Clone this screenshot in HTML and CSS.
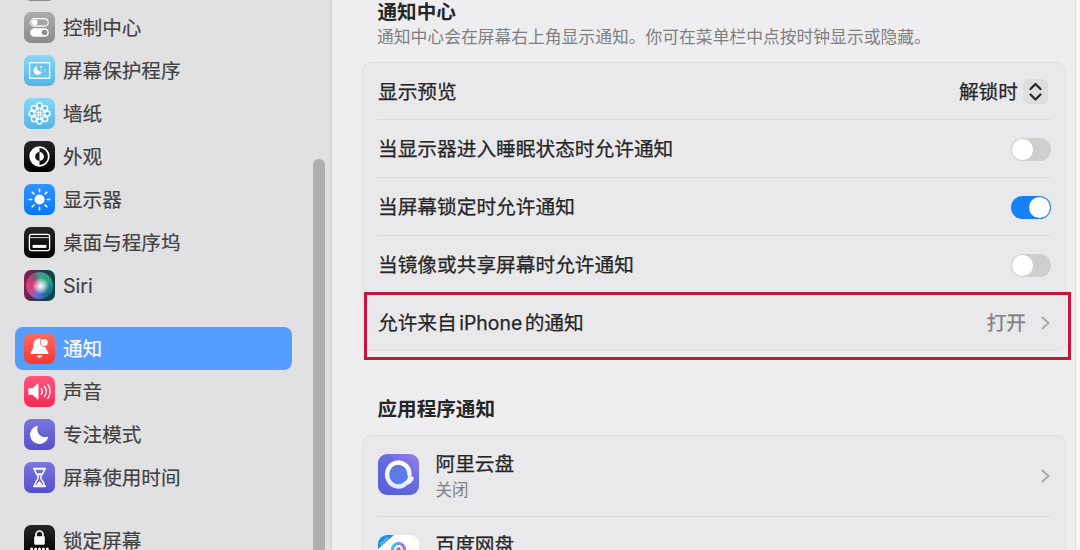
FILE: index.html
```
<!DOCTYPE html>
<html lang="zh-CN">
<head>
  <meta charset="UTF-8">
  <meta name="viewport" content="width=device-width, initial-scale=1.0">
  <title>通知</title>
  <link rel="stylesheet" href="styles.css">
</head>
<body>
  <div class="window">
    <div class="sidebar">
      <div class="nav">
        <div class="nav-item"><span class="icon gray"></span></div>
        <div class="nav-item">
          <svg class="icon gray" viewBox="0 0 31 31">
            <rect x="6.8" y="6.6" width="17.4" height="7.6" rx="3.8" fill="#a5a5a7" stroke="#fff" stroke-width="1.2"/>
            <circle cx="10.8" cy="10.4" r="2.8" fill="#fff"/>
            <rect x="6.2" y="16.2" width="18.6" height="8.6" rx="4.3" fill="#fff"/>
            <circle cx="20.6" cy="20.5" r="2.8" fill="#8e8e90"/>
          </svg>
          <span>控制中心</span>
        </div>
        <div class="nav-item">
          <svg class="icon sky" viewBox="0 0 31 31">
            <rect x="5.6" y="7.7" width="20" height="15.6" fill="#69c3ec" stroke="#fff" stroke-width="1.3"/>
            <path d="M13 11.2a4.3 4.3 0 1 0 5 5.3 4.1 4.1 0 0 1-5-5.3z" fill="#fff"/>
            <circle cx="17.2" cy="12" r="1" fill="#fff"/>
            <circle cx="20.8" cy="14.8" r=".7" fill="#d8f1fc"/>
            <circle cx="16.8" cy="14.6" r=".6" fill="#d8f1fc"/>
          </svg>
          <span>屏幕保护程序</span>
        </div>
        <div class="nav-item">
          <svg class="icon sky" viewBox="0 0 31 31">
            <circle cx="15.5" cy="15.5" r="6" fill="#c3eafa"/>
            <g fill="#5bb9e6" stroke="#fff" stroke-width="1.5">
              <circle cx="15.5" cy="7.7" r="2.6"/>
              <circle cx="21" cy="10" r="2.6"/>
              <circle cx="23.3" cy="15.5" r="2.6"/>
              <circle cx="21" cy="21" r="2.6"/>
              <circle cx="15.5" cy="23.3" r="2.6"/>
              <circle cx="10" cy="21" r="2.6"/>
              <circle cx="7.7" cy="15.5" r="2.6"/>
              <circle cx="10" cy="10" r="2.6"/>
            </g>
            <path d="M15.5 10.5v10M10.5 15.5h10M12 12l7 7M19 12l-7 7" stroke="#67c0e9" stroke-width="1"/>
            <circle cx="15.5" cy="15.5" r="2" fill="#fff"/>
            <circle cx="15.5" cy="15.5" r=".8" fill="#5bb9e6"/>
          </svg>
          <span>墙纸</span>
        </div>
        <div class="nav-item">
          <svg class="icon black" viewBox="0 0 31 31">
            <circle cx="15.5" cy="15.5" r="9.3" fill="none" stroke="#fff" stroke-width="1.7"/>
            <path d="M15.5 6.2a9.3 9.3 0 0 0 0 18.6v-4.9a4.4 4.4 0 0 1 0-8.8z" fill="#fff"/>
            <path d="M15.5 11.1a4.4 4.4 0 0 1 0 8.8z" fill="#fff"/>
          </svg>
          <span>外观</span>
        </div>
        <div class="nav-item">
          <svg class="icon blue" viewBox="0 0 31 31">
            <circle cx="15.5" cy="15.5" r="5.1" fill="#fff"/>
            <path d="M15.5 5.2v2.5M15.5 23.3v2.5M5.2 15.5h2.5M23.3 15.5h2.5M8.2 8.2L10 10M21 21l1.8 1.8M22.8 8.2L21 10M10 21l-1.8 1.8" stroke="#fff" stroke-width="1.6" stroke-linecap="round"/>
          </svg>
          <span>显示器</span>
        </div>
        <div class="nav-item">
          <svg class="icon black" viewBox="0 0 31 31">
            <rect x="5.4" y="7.4" width="20.2" height="16.2" rx="2" fill="none" stroke="#fff" stroke-width="1.3"/>
            <path d="M5.5 10.6h20" stroke="#ddd" stroke-width="1"/>
            <rect x="8.6" y="17.9" width="13.8" height="3" fill="#fff"/>
          </svg>
          <span>桌面与程序坞</span>
        </div>
        <div class="nav-item">
          <span class="icon siri"><span class="siri-orb"></span></span>
          <span>Siri</span>
        </div>
      </div>
      <div class="nav">
        <div class="nav-item active">
          <svg class="icon red" viewBox="0 0 31 31">
            <path d="M15 5.5c-4.2.2-5.3 3.2-5.6 6.6-.3 3.5-.7 4.8-2.4 6.8-.7.8-.6 2.1.7 2.1h15.6c1.3 0 1.4-1.3.7-2.1-1.3-1.5-1.9-2.5-2.2-4.6L18 12V6.5c-.6-.6-1.6-1-3-1z" fill="#fff"/>
            <path d="M12.7 22.6h5.6a2.9 2.9 0 0 1-5.6 0z" fill="#fff"/>
            <circle cx="20.2" cy="9.4" r="4.3" fill="#ff5a50"/>
            <circle cx="20.2" cy="9.4" r="3.5" fill="#fff"/>
          </svg>
          <span>通知</span>
        </div>
        <div class="nav-item">
          <svg class="icon pink" viewBox="0 0 31 31">
            <path d="M4.3 12.3h4.2l5-4.5c.5-.4 1-.2 1 .4v14.6c0 .6-.5.8-1 .4l-5-4.5H4.3z" fill="#fff"/>
            <g fill="none" stroke="#fff" stroke-width="1.4" stroke-linecap="round">
              <path d="M17.3 12.6a5 5 0 0 1 0 5.8"/>
              <path d="M20.5 10.5a8.5 8.5 0 0 1 0 10"/>
              <path d="M23.8 8.4a12.5 12.5 0 0 1 0 14.2"/>
            </g>
          </svg>
          <span>声音</span>
        </div>
        <div class="nav-item">
          <svg class="icon purple" viewBox="0 0 31 31">
            <path d="M13 6.8c.4-.2.8.1.7.6-1.9 6.4 3 12 9.8 10.4.5-.1.8.3.6.7A9.2 9.2 0 1 1 13 6.8z" fill="#fff"/>
          </svg>
          <span>专注模式</span>
        </div>
        <div class="nav-item">
          <svg class="icon purple" viewBox="0 0 31 31">
            <path d="M10 6.7h11M10 24.3h11" stroke="#fff" stroke-width="2" stroke-linecap="round"/>
            <path d="M10.7 7c0 4.5 3.6 6 3.6 8.5s-3.6 4-3.6 8.5M20.3 7c0 4.5-3.6 6-3.6 8.5s3.6 4 3.6 8.5" fill="none" stroke="#fff" stroke-width="1.5"/>
            <path d="M13 11.3h5c-.5.8-1.2 1.5-1.8 2.2h-1.4c-.6-.7-1.300-1.400-1.800-2.200zM15.5 19l3.500 4h-7z" fill="#fff"/>
          </svg>
          <span>屏幕使用时间</span>
        </div>
      </div>
      <div class="nav">
        <div class="nav-item">
          <svg class="icon black" viewBox="0 0 31 31">
            <path d="M12 12V9.5a3.5 3.5 0 0 1 7 0V12" fill="none" stroke="#fff" stroke-width="1.7"/>
            <rect x="10.2" y="11.3" width="10.6" height="8.5" rx="1.3" fill="#fff"/>
            <g fill="#fff">
              <circle cx="7.7" cy="24" r="1.5"/>
              <circle cx="11.6" cy="24" r="1.5"/>
              <circle cx="15.5" cy="24" r="1.5"/>
              <circle cx="19.4" cy="24" r="1.5"/>
              <circle cx="23.3" cy="24" r="1.5"/>
            </g>
          </svg>
          <span>锁定屏幕</span>
        </div>
      </div>
      <div class="scrollbar"></div>
    </div>

    <div class="content">
      <h2>通知中心</h2>
      <p class="desc">通知中心会在屏幕右上角显示通知。你可在菜单栏中点按时钟显示或隐藏。</p>
      <div class="card">
        <div class="row first">
          <span>显示预览</span>
          <span class="select">解锁时
            <svg class="stepper" viewBox="0 0 25 25">
              <path d="M7.5 10l5-5 5 5M7.5 15.5l5 5 5-5" fill="none" stroke="#252525" stroke-width="2.2" stroke-linecap="round" stroke-linejoin="round"/>
            </svg>
          </span>
        </div>
        <div class="row"><span>当显示器进入睡眠状态时允许通知</span><span class="toggle"></span></div>
        <div class="row"><span>当屏幕锁定时允许通知</span><span class="toggle on"></span></div>
        <div class="row"><span>当镜像或共享屏幕时允许通知</span><span class="toggle"></span></div>
        <div class="row last">
          <span>允许来自<span class="latin">iPhone</span>的通知</span>
          <span class="value">打开
            <svg class="chevron" viewBox="0 0 10 16"><path d="M1.5 2.5l6 5.5-6 5.5" fill="none" stroke="#aaaaac" stroke-width="2" stroke-linecap="round" stroke-linejoin="round"/></svg>
          </span>
        </div>
        <div class="highlight"></div>
      </div>

      <h2 class="apps-title">应用程序通知</h2>
      <div class="card apps">
        <div class="app">
          <svg class="app-icon" viewBox="0 0 41 41">
            <defs>
              <linearGradient id="drive" x1="1" y1="0" x2=".2" y2="1">
                <stop offset="0" stop-color="#9a80e6"/>
                <stop offset=".45" stop-color="#6a6ce0"/>
                <stop offset="1" stop-color="#5560d8"/>
              </linearGradient>
              <linearGradient id="ring" x1="0" y1="0" x2="0" y2="1">
                <stop offset="0" stop-color="#fff"/>
                <stop offset="1" stop-color="#e6e8fd"/>
              </linearGradient>
            </defs>
            <rect width="41" height="41" rx="9" fill="url(#drive)"/>
            <circle cx="21" cy="20.5" r="12" fill="#5b7ce8"/>
            <path d="M31.5 20.5A11.2 12 0 1 0 28 29.2C30.500 28.500 32.500 27 33.500 24.500" fill="none" stroke="url(#ring)" stroke-width="4.4" stroke-linecap="round" stroke-linejoin="round"/>
            <path d="M27.500 28.500l3-6.500 5.500 1.500-3.500 4.500z" fill="#f4f5ff"/>
          </svg>
          <div class="app-text">
            <div>阿里云盘</div>
            <div class="status">关闭</div>
          </div>
          <svg class="chevron" viewBox="0 0 10 16"><path d="M1.5 2.5l6 5.5-6 5.5" fill="none" stroke="#aaaaac" stroke-width="2" stroke-linecap="round" stroke-linejoin="round"/></svg>
        </div>
        <div class="app">
          <svg class="app-icon" viewBox="0 0 41 41">
            <defs>
              <clipPath id="tile"><rect width="41" height="41" rx="9"/></clipPath>
              <linearGradient id="cloud">
                <stop offset="0" stop-color="#35c8f0"/>
                <stop offset=".5" stop-color="#5aa0f4"/>
                <stop offset="1" stop-color="#b070e0"/>
              </linearGradient>
            </defs>
            <g clip-path="url(#tile)">
              <rect width="41" height="41" fill="#fff"/>
              <path d="M0 0h16L0 14z" fill="#1c8fe0"/>
              <path d="M2.5 9.500l8-7" stroke="#7cc4f2" stroke-width="2.5" stroke-dasharray="1.5 1"/>
            </g>
            <circle cx="20.5" cy="14.5" r="6" fill="none" stroke="url(#cloud)" stroke-width="3.200"/>
            <circle cx="20.5" cy="14.5" r="2.200" fill="#f0566a"/>
            <circle cx="13.5" cy="26" r="6" fill="none" stroke="#1fa2f2" stroke-width="3"/>
            <circle cx="27.5" cy="26" r="6" fill="none" stroke="#3272f0" stroke-width="3"/>
          </svg>
          <div class="app-text">
            <div>百度网盘</div>
            <div class="status">关闭</div>
          </div>
          <svg class="chevron" viewBox="0 0 10 16"><path d="M1.5 2.5l6 5.5-6 5.5" fill="none" stroke="#aaaaac" stroke-width="2" stroke-linecap="round" stroke-linejoin="round"/></svg>
        </div>
      </div>
    </div>
    <div class="edge"></div>
  </div>
</body>
</html>
```
FILE: styles.css
```
* {
  box-sizing: border-box;
}
body {
  margin: 0;
  overflow: hidden;
  font-family: Inter, "Noto Sans CJK SC", sans-serif;
  font-size: 19.6px;
  color: #262627;
}
.window {
  display: flex;
  height: 550px;
  overflow: hidden;
  background-color: #eeeef0;
}

/* sidebar */
.sidebar {
  position: relative;
  flex: none;
  width: 332px;
  height: 550px;
  padding: 0 40px 0 15px;
  overflow: hidden;
  background-color: #e1e1e3;
  border-right: 2px solid #d6d6d8;
  color: #424243;
  -webkit-text-stroke: 0.2px;
}
.nav {
  margin-bottom: 20px;
}
.nav:first-child {
  margin-top: -37px;
}
.nav-item {
  display: flex;
  align-items: center;
  gap: 8px;
  width: 277px;
  height: 43px;
  padding-left: 9px;
  border-radius: 8px;
  line-height: 41px;
}
.nav-item span:last-child:not(.icon):not(.siri-orb) {
  padding-top: 2px;
}
.nav-item.active {
  background-color: #559dff;
  color: #fff;
}
.icon {
  flex: none;
  width: 31px;
  height: 31px;
  border-radius: 7px;
}
.gray {
  background: linear-gradient(#acacae, #8c8c8e);
}
.nav-item:first-child > .gray {
  margin-top: 1px;
}
.sky {
  background: linear-gradient(#85d8f7, #55b5e5);
}
.black {
  background: linear-gradient(#262626, #000);
}
.blue {
  background: linear-gradient(#3293ff, #0878fb);
}
.red {
  background: linear-gradient(#ff6c62, #fb372f);
}
.pink {
  background: linear-gradient(#ff567c, #f92a54);
}
.purple {
  background: linear-gradient(#7a76de, #5650c8);
}
.siri {
  display: flex;
  align-items: center;
  justify-content: center;
  background: linear-gradient(100deg, #83204f 10%, #31364f 50%, #0a4648 90%);
}
.siri-orb {
  width: 27px;
  height: 27px;
  border-radius: 50%;
  background:
    radial-gradient(circle at 55% 52%, #fff 0, rgba(255, 255, 255, 0.75) 12%, rgba(255, 255, 255, 0) 42%),
    conic-gradient(#3f9c86, #2aa486 60deg, #157985 110deg, #2362a8 150deg, #4f74d4 190deg, #c04b9b 225deg, #dc376f 280deg, #934d77 325deg, #3f9c86);
}
.scrollbar {
  position: absolute;
  top: 159px;
  right: 5px;
  width: 12px;
  height: 420px;
  border-radius: 6px;
  background-color: #afafae;
}

/* settings */
.content {
  flex: none;
  width: 743px;
  padding: 0 9px 0 30px;
}
h2 {
  margin: 0;
  padding-left: 15.5px;
  font-size: 19.6px;
  font-weight: 700;
  line-height: 24px;
}
.desc {
  margin: 0;
  padding-left: 15px;
  font-size: 16.8px;
  line-height: 26px;
  color: #7f7f81;
  white-space: nowrap;
}
.card {
  position: relative;
  height: 289px;
  margin-top: 12px;
  padding: 0 14px 0 15px;
  background-color: #e9e9eb;
  border: 1px solid #e0e0e2;
  border-radius: 9px;
  font-size: 19.7px;
  -webkit-text-stroke: 0.25px;
}
.row {
  display: flex;
  align-items: center;
  justify-content: space-between;
  height: 58.2px;
  padding-bottom: 2px;
  border-top: 1px solid #dcdcde;
}
.row.first {
  height: 56px;
  border-top: none;
}
.row.last {
  padding-bottom: 3px;
}
.select {
  display: flex;
  align-items: center;
  gap: 5px;
  padding-right: 3px;
}
.stepper {
  width: 25px;
  height: 25px;
  margin-top: 2px;
  border-radius: 6px;
  background-color: #dedee0;
}
.latin {
  margin: 0 2.5px;
  font-size: 19.4px;
}
.toggle {
  width: 40px;
  height: 23px;
  margin-top: 3px;
  padding: 1px;
  border-radius: 12px;
  background-color: #cfcfd0;
}
.toggle::before {
  content: "";
  display: block;
  width: 21px;
  height: 21px;
  border-radius: 50%;
  background-color: #fff;
}
.toggle.on {
  background-color: #1680fb;
}
.toggle.on::before {
  margin-left: 17px;
}
.value {
  display: flex;
  align-items: center;
  gap: 15px;
  color: #808082;
}
.chevron {
  width: 10px;
  height: 16px;
}
.value .chevron {
  margin-top: 2px;
}
.highlight {
  position: absolute;
  top: 229px;
  left: 1px;
  width: 707px;
  height: 68px;
  border: 3px solid #c8143c;
}

/* app list */
.apps-title {
  margin-top: 46px;
}
.apps {
  height: 180px;
  margin-top: 14px;
}
.app {
  display: flex;
  align-items: center;
  height: 81px;
  border-bottom: 1px solid #dcdcde;
}
.app-icon {
  width: 41px;
  height: 41px;
  margin-bottom: 4px;
}
.app-text {
  flex: 1;
  padding-left: 16.5px;
  padding-bottom: 1px;
  line-height: 28px;
}
.status {
  font-size: 16.5px;
  line-height: 24px;
  color: #808082;
  -webkit-text-stroke: 0;
}
.edge {
  flex: 1;
  background-color: #f7f7f8;
  border-left: 1px solid #dedee0;
}
```
